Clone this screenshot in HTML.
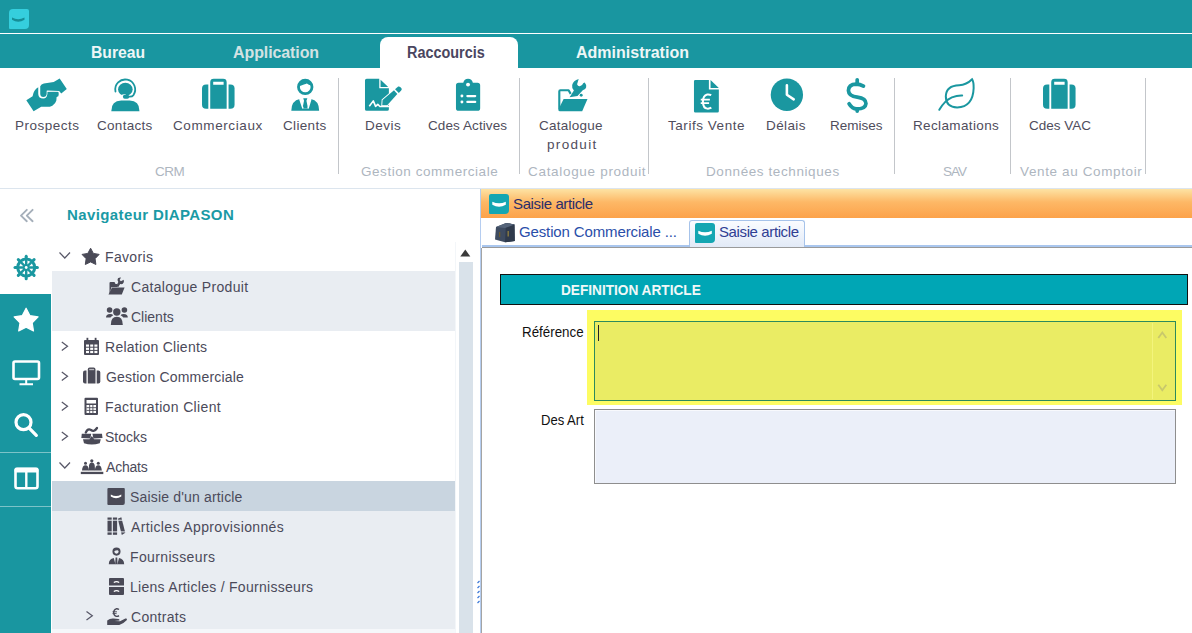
<!DOCTYPE html>
<html><head><meta charset="utf-8">
<style>
*{margin:0;padding:0;box-sizing:border-box}
html,body{width:1192px;height:633px;overflow:hidden;background:#fff;font-family:"Liberation Sans",sans-serif}
.a{position:absolute}
svg{position:absolute;overflow:visible}
.tab{position:absolute;font-weight:bold;font-size:16px;color:#eef6f7;white-space:nowrap;line-height:17px}
.rl{position:absolute;font-size:13.5px;color:#4f4d5c;white-space:nowrap;line-height:15px}
.gl{position:absolute;font-size:13.5px;color:#aeb6bf;white-space:nowrap;line-height:15px}
.sep{position:absolute;top:78px;width:1px;height:96px;background:#c3c6ca}
.tt{position:absolute;font-size:14px;color:#4b4a5a;white-space:nowrap;line-height:16px}
.rp{position:absolute;font-size:15px;white-space:nowrap;line-height:16px}
</style></head><body>
<!-- TITLE + TABS -->
<div class="a" style="left:0;top:0;width:1192px;height:68px;background:#1996a0"></div>
<div class="a" style="left:0;top:33px;width:1192px;height:1px;background:#ffffff"></div>
<div class="a" style="left:8.5px;top:9px;width:20px;height:20px;background:#35cedd;border-radius:4px 2px 4px 1px"></div>
<div class="a" style="left:380px;top:37px;width:138px;height:31px;background:#fff;border-radius:8px 8px 0 0"></div>
<div id="t_bur" class="tab" style="left:91.0px;top:44px;transform:scaleX(0.9798);transform-origin:0 0">Bureau</div>
<div id="t_app" class="tab" style="color:#d3e2e3;left:233.0px;top:44px;letter-spacing:-0.100px">Application</div>
<div id="t_rac" class="tab" style="left:407.0px;top:44px;color:#4a4660;transform:scaleX(0.9012);transform-origin:0 0">Raccourcis</div>
<div id="t_adm" class="tab" style="left:576.0px;top:44px;letter-spacing:0.003px">Administration</div>

<!-- RIBBON -->
<div id="r_pro" class="rl" style="left:15.0px;top:118px;letter-spacing:0.500px">Prospects</div>
<div id="r_con" class="rl" style="left:97.0px;top:118px;letter-spacing:0.293px">Contacts</div>
<div id="r_com" class="rl" style="left:173.0px;top:118px;letter-spacing:0.600px">Commerciaux</div>
<div id="r_cli" class="rl" style="left:283.0px;top:118px;letter-spacing:0.335px">Clients</div>
<div id="r_dev" class="rl" style="left:365.0px;top:118px;letter-spacing:0.500px">Devis</div>
<div id="r_cda" class="rl" style="left:428.0px;top:118px;letter-spacing:0.087px">Cdes Actives</div>
<div id="r_cat" class="rl" style="left:539.0px;top:118px;letter-spacing:0.250px">Catalogue</div>
<div id="r_prd" class="rl" style="left:547.0px;top:137px;letter-spacing:1.330px">produit</div>
<div id="r_tar" class="rl" style="left:668.0px;top:118px;letter-spacing:0.541px">Tarifs Vente</div>
<div id="r_del" class="rl" style="left:766.0px;top:118px;letter-spacing:0.400px">Délais</div>
<div id="r_rem" class="rl" style="left:830.0px;top:118px;letter-spacing:0.001px">Remises</div>
<div id="r_rec" class="rl" style="left:913.0px;top:118px;letter-spacing:0.369px">Reclamations</div>
<div id="r_vac" class="rl" style="left:1029.0px;top:118px;letter-spacing:0.005px">Cdes VAC</div>

<div id="g_crm" class="gl" style="left:155.0px;top:164px;letter-spacing:-0.500px">CRM</div>
<div id="g_gc" class="gl" style="left:361.0px;top:164px;letter-spacing:0.551px">Gestion commerciale</div>
<div id="g_cp" class="gl" style="left:528.0px;top:164px;letter-spacing:0.69px">Catalogue produit</div>
<div id="g_dt" class="gl" style="left:706.0px;top:164px;letter-spacing:0.592px">Données techniques</div>
<div id="g_sav" class="gl" style="left:943.0px;top:164px;letter-spacing:-1.000px">SAV</div>
<div id="g_vac" class="gl" style="left:1020.0px;top:164px;letter-spacing:0.621px">Vente au Comptoir</div>

<div class="sep" style="left:338px"></div>
<div class="sep" style="left:519px"></div>
<div class="sep" style="left:648px"></div>
<div class="sep" style="left:894px"></div>
<div class="sep" style="left:1010px"></div>
<div class="sep" style="left:1145px"></div>
<div class="a" style="left:0;top:188px;width:1192px;height:1px;background:#dce5ee"></div>
<!--ICONS_RIBBON--><svg style="left:22px;top:74px" width="50" height="42" viewBox="0 0 754 633" fill="#1a97a0">
<path d="M65,395 L160,335 Q175,240 245,200 L245,300 Q250,368 320,370 Q375,368 378,300 L378,268 L548,265 Q560,300 548,335 L522,348 L518,400 Q505,450 458,480 L420,492 L290,492 L175,562 Z"/>
<path d="M275,185 Q288,150 330,142 L478,120 L568,68 L675,225 L592,292 L560,255 L385,250 L372,252 L372,300 Q368,345 320,345 Q278,345 275,300 Z" stroke="#fff" stroke-width="22" paint-order="stroke"/>
</svg>
<svg style="left:106px;top:74px" width="40" height="42" viewBox="0 0 603 633" fill="#1a97a0">
<path d="M143,264 A150,150 0 1 1 413,319 Q395,345 350,342" fill="none" stroke="#1a97a0" stroke-width="27" stroke-linecap="round"/>
<ellipse cx="292" cy="232" rx="110" ry="100"/>
<path d="M230,318 Q260,300 300,308 L300,330 L240,345 Z" fill="#fff"/>
<rect x="255" y="312" width="95" height="60" rx="28"/>
<path d="M80,560 Q80,400 230,400 L355,400 Q505,400 505,560 Z"/>
</svg>
<svg style="left:196px;top:74px" width="44" height="40" viewBox="0 0 696 633" fill="#1a97a0">
<path d="M195,165 L195,550 L160,550 Q95,550 95,485 L95,230 Q95,165 160,165 Z"/>
<path d="M515,165 L545,165 Q610,165 610,230 L610,485 Q610,550 545,550 L515,550 Z"/>
<path d="M225,130 Q225,75 280,75 L430,75 Q485,75 485,130 L485,550 L225,550 Z M272,122 L272,170 L437,170 L437,122 Z" fill-rule="evenodd"/>
</svg>
<svg style="left:284px;top:74px" width="44" height="42" viewBox="0 0 663 633" fill="#1a97a0">
<circle cx="320" cy="195" r="102" fill="none" stroke="#1a97a0" stroke-width="42"/>
<path d="M225,185 Q260,175 300,160 Q330,150 345,145 Q370,170 410,175 L420,140 Q380,95 320,95 Q230,100 220,180 Z"/>
<path d="M110,555 Q112,400 238,378 L290,520 L360,520 L405,378 Q528,400 530,555 Z"/>
<path d="M290,365 L352,365 L338,402 L362,520 L278,520 L302,402 Z"/>
<path d="M238,378 L286,520 M405,378 L362,520" stroke="#fff" stroke-width="22"/>
</svg>
<svg style="left:360px;top:74px" width="48" height="42" viewBox="0 0 723 633" fill="#1a97a0">
<path d="M75,95 Q75,70 100,70 L290,70 L290,215 L435,215 L435,530 Q435,555 410,555 L100,555 Q75,555 75,530 Z"/>
<path d="M310,85 L425,195 L310,195 Z"/>
<path d="M335,470 L340,390 L512,245 L562,300 L410,470 Z" stroke="#fff" stroke-width="28" paint-order="stroke"/>
<path d="M528,228 L575,190 Q590,182 605,195 L625,215 Q635,235 620,250 L585,285 Z" stroke="#fff" stroke-width="24" paint-order="stroke"/>
<path d="M140,485 L200,405 L235,488 L268,458 L300,490 L440,490" fill="none" stroke="#fff" stroke-width="24" stroke-linejoin="round"/>
</svg>
<svg style="left:450px;top:74px" width="36" height="42" viewBox="0 0 543 633" fill="#1a97a0">
<path d="M130,130 L200,130 Q215,70 272,70 Q330,70 345,130 L415,130 Q455,130 455,170 L455,515 Q455,555 415,555 L130,555 Q90,555 90,515 L90,170 Q90,130 130,130 Z"/>
<circle cx="272" cy="160" r="30" fill="#fff"/>
<circle cx="180" cy="332" r="22" fill="#fff"/><circle cx="180" cy="422" r="22" fill="#fff"/>
<rect x="245" y="315" width="152" height="34" rx="17" fill="#fff"/><rect x="245" y="405" width="152" height="34" rx="17" fill="#fff"/>
</svg>
<svg style="left:552px;top:74px" width="42" height="42" viewBox="0 0 633 633" fill="#1a97a0">
<path d="M110,530 L110,262 Q110,245 127,245 L250,245 L282,300" fill="none" stroke="#1a97a0" stroke-width="32" stroke-linejoin="round"/>
<path d="M175,375 L535,375 L455,560 L115,560 Q95,560 95,540 Z"/>
<path d="M402,75 L378,155 Q390,190 419,186 Q455,180 470,139 L493,127 Q522,160 515,200 Q505,240 464,245 L384,333 L265,350 L330,250 Q295,215 304,167 Q320,95 402,75 Z"/>
<circle cx="440" cy="320" r="22"/>
</svg>
<svg style="left:688px;top:74px" width="38" height="42" viewBox="0 0 573 633" fill="#1a97a0">
<path d="M110,90 L315,90 L315,235 L465,235 L465,560 Q465,580 445,580 L110,580 Q90,580 90,560 L90,110 Q90,90 110,90 Z"/>
<path d="M340,92 L465,210 L340,210 Z"/>
<path d="M350,320 Q320,305 290,310 Q225,325 225,420 Q228,515 290,522 Q325,525 352,508" fill="none" stroke="#fff" stroke-width="30"/>
<path d="M192,385 L330,385 M192,440 L318,440" stroke="#fff" stroke-width="26"/>
</svg>
<svg style="left:764px;top:74px" width="110" height="42" viewBox="0 0 1192 455" fill="#1a97a0">
<circle cx="248" cy="225" r="175"/>
<path d="M248,122 L248,225 L322,275" fill="none" stroke="#fff" stroke-width="28" stroke-linecap="round" stroke-linejoin="round"/>
<path d="M1078,132 Q1040,110 1000,110 Q915,112 915,180 Q918,240 1010,250 Q1105,262 1105,320 Q1100,378 1005,378 Q955,378 922,322" fill="none" stroke="#1a97a0" stroke-width="40" stroke-linecap="round"/>
<path d="M1010,62 L1010,110 M1010,378 L1010,402" stroke="#1a97a0" stroke-width="40" stroke-linecap="round"/>
</svg>
<svg style="left:932px;top:74px" width="50" height="42" viewBox="0 0 754 633" fill="none" stroke="#1a97a0" stroke-width="30" stroke-linecap="round">
<path d="M605,80 Q520,165 410,170 Q215,175 208,335 Q210,500 380,505 Q618,495 628,215 Q630,120 605,80 Z"/>
<path d="M110,540 Q190,400 300,352 Q380,322 455,325"/>
</svg>
<svg style="left:1037px;top:74px" width="44" height="40" viewBox="0 0 696 633" fill="#1a97a0">
<path d="M195,165 L195,550 L160,550 Q95,550 95,485 L95,230 Q95,165 160,165 Z"/>
<path d="M515,165 L545,165 Q610,165 610,230 L610,485 Q610,550 545,550 L515,550 Z"/>
<path d="M225,130 Q225,75 280,75 L430,75 Q485,75 485,130 L485,550 L225,550 Z M272,122 L272,170 L437,170 L437,122 Z" fill-rule="evenodd"/>
</svg>
<!--/ICONS_RIBBON-->

<!-- LEFT PANEL -->
<div class="a" style="left:0;top:294px;width:51px;height:339px;background:#1996a0"></div>
<div class="a" style="left:0;top:452px;width:51px;height:1px;background:#7cc3c8"></div>
<div class="a" style="left:0;top:506px;width:51px;height:1px;background:#7cc3c8"></div>
<div id="l_nav" class="a" style="left:67.0px;top:206px;font-size:15px;font-weight:bold;color:#1a9aa5;white-space:nowrap;line-height:17px;letter-spacing:0.389px">Navigateur DIAPASON</div>
<div class="a" style="left:52px;top:271px;width:403px;height:60px;background:#e9edf2"></div>
<div class="a" style="left:52px;top:481px;width:403px;height:148px;background:#e9edf2"></div><div class="a" style="left:52px;top:629px;width:403px;height:4px;background:#f5f7fa"></div>
<div class="a" style="left:52px;top:481px;width:403px;height:30px;background:#c9d5e0"></div>
<div id="n_fav" class="tt" style="left:105.0px;top:249px;letter-spacing:0.333px">Favoris</div>
<div id="n_cat" class="tt" style="left:131.0px;top:279px;letter-spacing:0.310px">Catalogue Produit</div>
<div id="n_cli" class="tt" style="left:131.0px;top:309px;letter-spacing:-0.002px">Clients</div>
<div id="n_rel" class="tt" style="left:105.0px;top:339px;letter-spacing:0.270px">Relation Clients</div>
<div id="n_gc" class="tt" style="left:106.0px;top:369px;letter-spacing:0.172px">Gestion Commerciale</div>
<div id="n_fac" class="tt" style="left:105.0px;top:399px;letter-spacing:0.351px">Facturation Client</div>
<div id="n_sto" class="tt" style="left:105.0px;top:429px;letter-spacing:0.000px">Stocks</div>
<div id="n_ach" class="tt" style="left:106.0px;top:459px;letter-spacing:-0.200px">Achats</div>
<div id="n_sai" class="tt" style="left:130.0px;top:489px;letter-spacing:0.171px">Saisie d'un article</div>
<div id="n_art" class="tt" style="left:131.0px;top:519px;letter-spacing:0.364px">Articles Approvisionnés</div>
<div id="n_fou" class="tt" style="left:130.0px;top:549px;letter-spacing:0.363px">Fournisseurs</div>
<div id="n_lie" class="tt" style="left:130.0px;top:579px;letter-spacing:0.286px">Liens Articles / Fournisseurs</div>
<div id="n_con" class="tt" style="left:131.0px;top:609px;letter-spacing:0.283px">Contrats</div>
<div class="a" style="left:455px;top:242px;width:21px;height:391px;background:#fff;border-left:1px solid #f3f6f9"></div>
<div class="a" style="left:459px;top:262px;width:14px;height:371px;background:#d9e2ea"></div>
<!--ICONS_LEFT--><svg style="left:0;top:0" width="1192" height="633" viewBox="0 0 1192 633">
<!-- collapse chevrons -->
<path d="M26.8,209.8 L21,215.6 L26.8,221.2 M32.6,209.8 L26.8,215.6 L32.6,221.2" fill="none" stroke="#a5afba" stroke-width="1.9" stroke-linecap="round" stroke-linejoin="round"/>
<!-- wheel -->
<circle cx="26.2" cy="267.5" r="10" fill="#1a97a0"/>
<path d="M26.20,258.00 L26.20,256.30" stroke="#1a97a0" stroke-width="3" stroke-linecap="round"/>
<path d="M32.92,260.78 L34.12,259.58" stroke="#1a97a0" stroke-width="3" stroke-linecap="round"/>
<path d="M35.70,267.50 L37.40,267.50" stroke="#1a97a0" stroke-width="3" stroke-linecap="round"/>
<path d="M32.92,274.22 L34.12,275.42" stroke="#1a97a0" stroke-width="3" stroke-linecap="round"/>
<path d="M26.20,277.00 L26.20,278.70" stroke="#1a97a0" stroke-width="3" stroke-linecap="round"/>
<path d="M19.48,274.22 L18.28,275.42" stroke="#1a97a0" stroke-width="3" stroke-linecap="round"/>
<path d="M16.70,267.50 L15.00,267.50" stroke="#1a97a0" stroke-width="3" stroke-linecap="round"/>
<path d="M19.48,260.78 L18.28,259.58" stroke="#1a97a0" stroke-width="3" stroke-linecap="round"/>
<path d="M27.42,264.54 L27.42,260.61 L30.22,261.77 Z" fill="#fff"/>
<path d="M29.16,266.28 L31.93,263.48 L33.09,266.28 Z" fill="#fff"/>
<path d="M29.16,268.72 L33.09,268.72 L31.93,271.52 Z" fill="#fff"/>
<path d="M27.42,270.46 L30.22,273.23 L27.42,274.39 Z" fill="#fff"/>
<path d="M24.98,270.46 L24.98,274.39 L22.18,273.23 Z" fill="#fff"/>
<path d="M23.24,268.72 L20.47,271.52 L19.31,268.72 Z" fill="#fff"/>
<path d="M23.24,266.28 L19.31,266.28 L20.47,263.48 Z" fill="#fff"/>
<path d="M24.98,264.54 L22.18,261.77 L24.98,260.61 Z" fill="#fff"/>
<circle cx="26.2" cy="267.5" r="1.4" fill="#fff"/>
<!-- sidebar white icons -->
<path d="M26.10,308.20 L29.86,315.62 L38.08,316.91 L32.19,322.78 L33.51,330.99 L26.10,327.20 L18.69,330.99 L20.01,322.78 L14.12,316.91 L22.34,315.62 Z" fill="#fff" stroke="#fff" stroke-width="1.2" stroke-linejoin="round"/>
<rect x="13.5" y="361.5" width="25.5" height="17.5" rx="1.5" fill="none" stroke="#fff" stroke-width="2.6"/>
<path d="M26.2,380 L26.2,384 M19.5,384.2 L33,384.2" stroke="#fff" stroke-width="2"/>
<circle cx="23.5" cy="422.2" r="7.5" fill="none" stroke="#fff" stroke-width="3.2"/>
<path d="M29.2,428.2 L36.3,435.3" stroke="#fff" stroke-width="3.3" stroke-linecap="round"/>
<rect x="15.5" y="469" width="22" height="19.3" rx="2" fill="none" stroke="#fff" stroke-width="2.6"/>
<rect x="14.5" y="467.6" width="24" height="5" rx="1.8" fill="#fff"/>
<path d="M26.3,472 L26.3,488" stroke="#fff" stroke-width="2.4"/>
<!-- tree chevrons -->
<g fill="none" stroke="#585868" stroke-width="1.25">
<path d="M59.5,252.5 L64.8,258 L70,252.5"/>
<path d="M59.5,462.5 L64.8,468 L70,462.5"/>
<path d="M61.8,342 L67.5,346.3 L61.8,350.5"/>
<path d="M61.8,372 L67.5,376.3 L61.8,380.5"/>
<path d="M61.8,402 L67.5,406.3 L61.8,410.5"/>
<path d="M61.8,432 L67.5,436.3 L61.8,440.5"/>
<path d="M86.5,611.5 L92.3,615.8 L86.5,620"/>
</g>
<g fill="#4a4a57">
<!-- star -->
<path d="M90.60,248.20 L93.36,253.40 L99.16,254.42 L95.07,258.65 L95.89,264.48 L90.60,261.90 L85.31,264.48 L86.13,258.65 L82.04,254.42 L87.84,253.40 Z" stroke="#4a4a57" stroke-width="1" stroke-linejoin="round"/>
<!-- catalogue folder wrench -->
<path d="M109.5,294 L109.5,283 Q109.5,282 110.5,282 L114.5,282 L115.5,284 L117,284 L117,287 L111.5,287 L109.5,294 Z"/>
<path d="M112,287.5 L124.6,287.5 L121.8,294.5 L108.5,294.5 Z"/>
<path d="M116,286.5 L118.3,282 Q116.8,279.8 118,278.3 Q119,277.5 121,277.6 L119.6,280 L120.9,281.3 L123.7,279.8 Q124.6,282.5 122.8,283.8 Q121.8,284.4 120.2,284 L118.3,287 Z"/>
<!-- users -->
<circle cx="116.8" cy="312" r="3.7"/><circle cx="109.6" cy="310" r="2.8"/><circle cx="124.4" cy="310" r="2.8"/>
<path d="M110.8,325 Q110.8,316.8 116.8,316.8 Q122.8,316.8 122.8,325 Z"/>
<path d="M106,317.5 Q106,314 110,314 Q112.5,314 113.2,315.3 Q111,316.8 110.5,317.5 Z"/>
<path d="M127.8,317.5 Q127.8,314 123.8,314 Q121.3,314 120.6,315.3 Q122.8,316.8 123.3,317.5 Z"/>
<!-- calendar -->
<path d="M84,341 Q84,340 85,340 L98,340 Q99,340 99,341 L99,354 Q99,355 98,355 L85,355 Q84,355 84,354 Z"/>
<rect x="86.5" y="337.8" width="1.8" height="4"/><rect x="94.7" y="337.8" width="1.8" height="4"/>
<g fill="#fff"><rect x="86" y="344.5" width="3" height="2.2"/><rect x="90.2" y="344.5" width="3" height="2.2"/><rect x="94.4" y="344.5" width="3" height="2.2"/>
<rect x="86" y="347.7" width="3" height="2.2"/><rect x="90.2" y="347.7" width="3" height="2.2"/><rect x="94.4" y="347.7" width="3" height="2.2"/>
<rect x="86" y="350.9" width="3" height="2.2"/><rect x="90.2" y="350.9" width="3" height="2.2"/><rect x="94.4" y="350.9" width="3" height="2.2"/></g>
<!-- briefcase -->
<path d="M86.5,370.5 L86.5,383.5 L85,383.5 Q83,383.5 83,381.5 L83,372.5 Q83,370.5 85,370.5 Z"/>
<path d="M96.7,370.5 L98.3,370.5 Q100.3,370.5 100.3,372.5 L100.3,381.5 Q100.3,383.5 98.3,383.5 L96.7,383.5 Z"/>
<path d="M87.8,369.5 Q87.8,367.6 89.7,367.6 L93.6,367.6 Q95.5,367.6 95.5,369.5 L95.5,383.5 L87.8,383.5 Z"/>
<rect x="89.2" y="368.9" width="4.9" height="1.3" fill="#fff" opacity="0.6"/>
<!-- calculator -->
<path d="M85.5,397.8 L97,397.8 Q98,397.8 98,398.8 L98,414 Q98,415 97,415 L85.5,415 Q84.5,415 84.5,414 L84.5,398.8 Q84.5,397.8 85.5,397.8 Z M86.5,400 L86.5,403.5 L96,403.5 L96,400 Z M86.5,405 L86.5,413 L96,413 L96,405 Z" fill-rule="evenodd"/>
<path d="M86.5,407.7 L96,407.7 M86.5,410.4 L96,410.4 M89.7,405 L89.7,413 M92.9,405 L92.9,413" stroke="#4a4a57" stroke-width="0.9"/>
<!-- stocks box -->
<path d="M85.8,432.5 Q87.8,428 91,430 Q94,432.5 97,428" fill="none" stroke="#4a4a57" stroke-width="2.3" stroke-linecap="round"/>
<path d="M81.8,433.8 L91.2,433.8 L90.4,438.6 L81.3,438 Z"/>
<path d="M92.4,433.8 L102,433.8 L102.5,438 L93.4,438.6 Z"/>
<path d="M83,439.3 L89.5,439.3 L91.8,436 L94.2,439.3 L100.8,439.3 L99.7,443.3 Q91.8,445.8 84,443.3 Z"/>
<!-- achats people -->
<rect x="80.8" y="471.8" width="22.5" height="2.3"/>
<circle cx="91.8" cy="460.8" r="1.6"/>
<path d="M88.7,470.5 L89,465.5 Q89.5,462.6 91.8,462.6 Q94.3,462.6 94.7,465.5 L95,470.5 Z"/>
<circle cx="85.5" cy="463.3" r="1.5"/>
<path d="M82,470.5 Q82.3,465.2 85.5,465.2 Q88.5,465.2 89,470.5 Z"/>
<circle cx="98.3" cy="463.3" r="1.5"/>
<path d="M94.8,470.5 Q95.3,465.2 98.3,465.2 Q101.5,465.2 101.8,470.5 Z"/>
<!-- saisie logo -->
<path d="M108.5,488 L123.8,488 Q124.8,488 124.8,489 L124.8,503 Q124.8,505 122.8,505 L108.4,505 Q107.4,505 107.4,504 L107.4,489 Q107.4,488 108.5,488 Z"/>
<path d="M110.8,494.5 Q116,497.5 121.3,494.5 L121.3,496.5 Q116,500 110.8,496.5 Z" fill="#fff"/>
<!-- books -->
<rect x="107.5" y="517.5" width="4.2" height="17.3"/>
<rect x="112.9" y="517.5" width="4.2" height="17.3"/>
<path d="M117.8,518.8 L121.3,517.3 L125.3,532.8 L121.8,535 Z"/>
<g fill="#e9edf2"><rect x="107" y="519.7" width="19" height="1"/><rect x="107" y="531.4" width="19" height="1"/></g>
<!-- user tie -->
<circle cx="116.5" cy="551.6" r="3.1" fill="none" stroke="#4a4a57" stroke-width="1.9"/>
<path d="M113.2,551 Q114,548.4 116.4,548.4 Q119,548.4 119.6,551 Q117.5,549.9 116,550.6 Q114.5,551.3 113.2,551 Z"/>
<path d="M108.8,564.3 Q108.8,558.6 113.8,557.9 L115.4,564.3 L117.4,564.3 L119,557.9 Q124,558.6 124.2,564.3 Z"/>
<path d="M115.6,557.5 L117.2,557.5 L117.6,564.3 L115.2,564.3 Z"/>
<!-- archive -->
<path d="M110,578 L123,578 Q124,578 124,579 L124,585.6 L109,585.6 L109,579 Q109,578 110,578 Z"/>
<path d="M109,586.9 L124,586.9 L124,593.9 Q124,594.9 123,594.9 L110,594.9 Q109,594.9 109,593.9 Z"/>
<path d="M113.8,582.5 Q116.5,580.7 119.2,582.5 M113.8,591.5 Q116.5,589.7 119.2,591.5" fill="none" stroke="#fff" stroke-width="1.2"/>
<!-- hand euro -->
<path d="M119,609.5 Q117.5,608.5 116.3,608.8 Q113.8,609.5 113.7,612.5 Q113.8,615.8 116.3,616.3 Q117.8,616.5 119,615.6" fill="none" stroke="#4a4a57" stroke-width="1.4"/>
<path d="M112.5,611.8 L117,611.8 M112.5,613.6 L116.6,613.6" stroke="#4a4a57" stroke-width="0.9"/>
<path d="M107.2,624.9 L107.2,620.4 Q110,618.2 113.5,618.5 L118.5,619 Q119.8,619.3 119.5,620.6 L114.5,620.9 L120,621.2 L125.4,618.6 Q127.3,618.3 126.9,619.9 Q124,623.2 119.3,624.9 Z"/>
</g>
<!-- scroll arrow -->
<path d="M460.3,256.5 L465.3,249.4 L470.3,256.5 Z" fill="#3a3a3a"/>
</svg>
<!--/ICONS_LEFT-->

<!-- RIGHT PANEL -->
<div class="a" style="left:480px;top:189px;width:1px;height:444px;background:#b5cdf0"></div>
<svg style="left:476px;top:580px" width="5" height="26" viewBox="0 0 5 26"><path d="M1.5,3 L3.5,1 M1.5,8 L3.5,6 M1.5,13 L3.5,11 M1.5,18 L3.5,16 M1.5,23 L3.5,21" stroke="#3a78d8" stroke-width="1.2"/></svg>
<div class="a" style="left:481px;top:189px;width:711px;height:29px;background:linear-gradient(#fde3a4,#fdb866 45%,#fca24a)"></div>
<div class="a" style="left:489px;top:194px;width:20px;height:20px;background:#14a6b2;border-radius:2px 3px 4px 1px"></div>
<div id="p_sa1" class="rp" style="left:513px;top:196px;color:#2b2e6a;letter-spacing:-0.375px">Saisie article</div>
<div class="a" style="left:482px;top:245px;width:710px;height:2px;background:#a9c6ee"></div>
<div class="a" style="left:482px;top:247px;width:710px;height:1px;background:#9a9a9a"></div>
<div id="p_gc" class="rp" style="left:519.0px;top:224px;color:#2a4ea9;letter-spacing:-0.131px">Gestion Commerciale ...</div>
<div class="a" style="left:689px;top:220px;width:116px;height:27px;background:linear-gradient(#fafcff,#e2eaf7);border:1px solid #a6c3ea;border-bottom:none;border-radius:3px 3px 0 0"></div>
<div class="a" style="left:695px;top:223px;width:20px;height:20px;background:#14a6b2;border-radius:2px 3px 4px 1px"></div>
<div id="p_sa2" class="rp" style="left:719.0px;top:224px;color:#2f3e93;letter-spacing:-0.386px">Saisie article</div>
<div class="a" style="left:481px;top:248px;width:1px;height:385px;background:#a4a4a4"></div>

<div class="a" style="left:500px;top:274px;width:688px;height:31px;background:#00a6b5;border:1px solid #111"></div>
<div id="p_def" class="rp" style="left:560.7px;top:282px;font-size:15px;font-weight:bold;color:#f0f8f8;transform:scaleX(0.9098);transform-origin:0 0">DEFINITION ARTICLE</div>
<div id="p_ref" class="rp" style="left:522.3px;top:324px;color:#111;transform:scaleX(0.8901);transform-origin:0 0">Référence</div>
<div class="a" style="left:587px;top:310px;width:595px;height:95px;background:#fdfc62"></div>
<div class="a" style="left:594px;top:321px;width:582px;height:80px;background:#eaec64;border:1px solid #2d8a5c"></div>
<div class="a" style="left:1152px;top:323px;width:1px;height:76px;background:#f3f47c"></div>
<div class="a" style="left:598px;top:325px;width:1px;height:16px;background:#222"></div>
<div id="p_des" class="rp" style="left:541.0px;top:412px;color:#111;transform:scaleX(0.8698);transform-origin:0 0">Des Art</div>
<div class="a" style="left:594px;top:409px;width:582px;height:75px;background:#ebeff9;border:1px solid #8e8e8e;box-shadow:inset 1px 1px 0 #f8f9fd"></div>
<!--ICONS_RIGHT--><svg style="left:0;top:0" width="1192" height="633" viewBox="0 0 1192 633">
<path d="M12,17.6 Q18.2,21 24.5,17.6 L24.5,19.8 Q18.2,23.6 12,19.8 Z" fill="#168e97"/>
<path d="M492.3,201.8 Q499,204.8 505.8,201.8 L505.8,204.8 Q499,208.6 492.3,204.8 Z" fill="#fff"/>
<path d="M698.3,230.8 Q705,233.8 711.8,230.8 L711.8,233.8 Q705,237.6 698.3,233.8 Z" fill="#fff"/>
<!-- briefcase photo -->
<path d="M496,227 L506,223 L514.5,224.5 L514.8,241 L505,242.3 L495,239.5 Z" fill="#3e4b60"/>
<path d="M506,223 L514.5,224.5 L514.8,241 L505,242.3 Z" fill="#2f3a4c"/>
<path d="M496,227 L506,223 L514.5,224.5 L505,228 Z" fill="#55647a"/>
<rect x="499" y="232" width="1.3" height="5" fill="#6a5a30"/><rect x="507.5" y="231" width="1.4" height="5.5" fill="#8a7a40"/>
<!-- textarea scroll arrows -->
<path d="M1158.3,338 L1162.3,332.5 L1166.3,338 M1158.3,384.8 L1162.3,390.3 L1166.3,384.8" fill="none" stroke="#c8c86c" stroke-width="1.8"/>
</svg>
<!--/ICONS_RIGHT-->
</body></html>
